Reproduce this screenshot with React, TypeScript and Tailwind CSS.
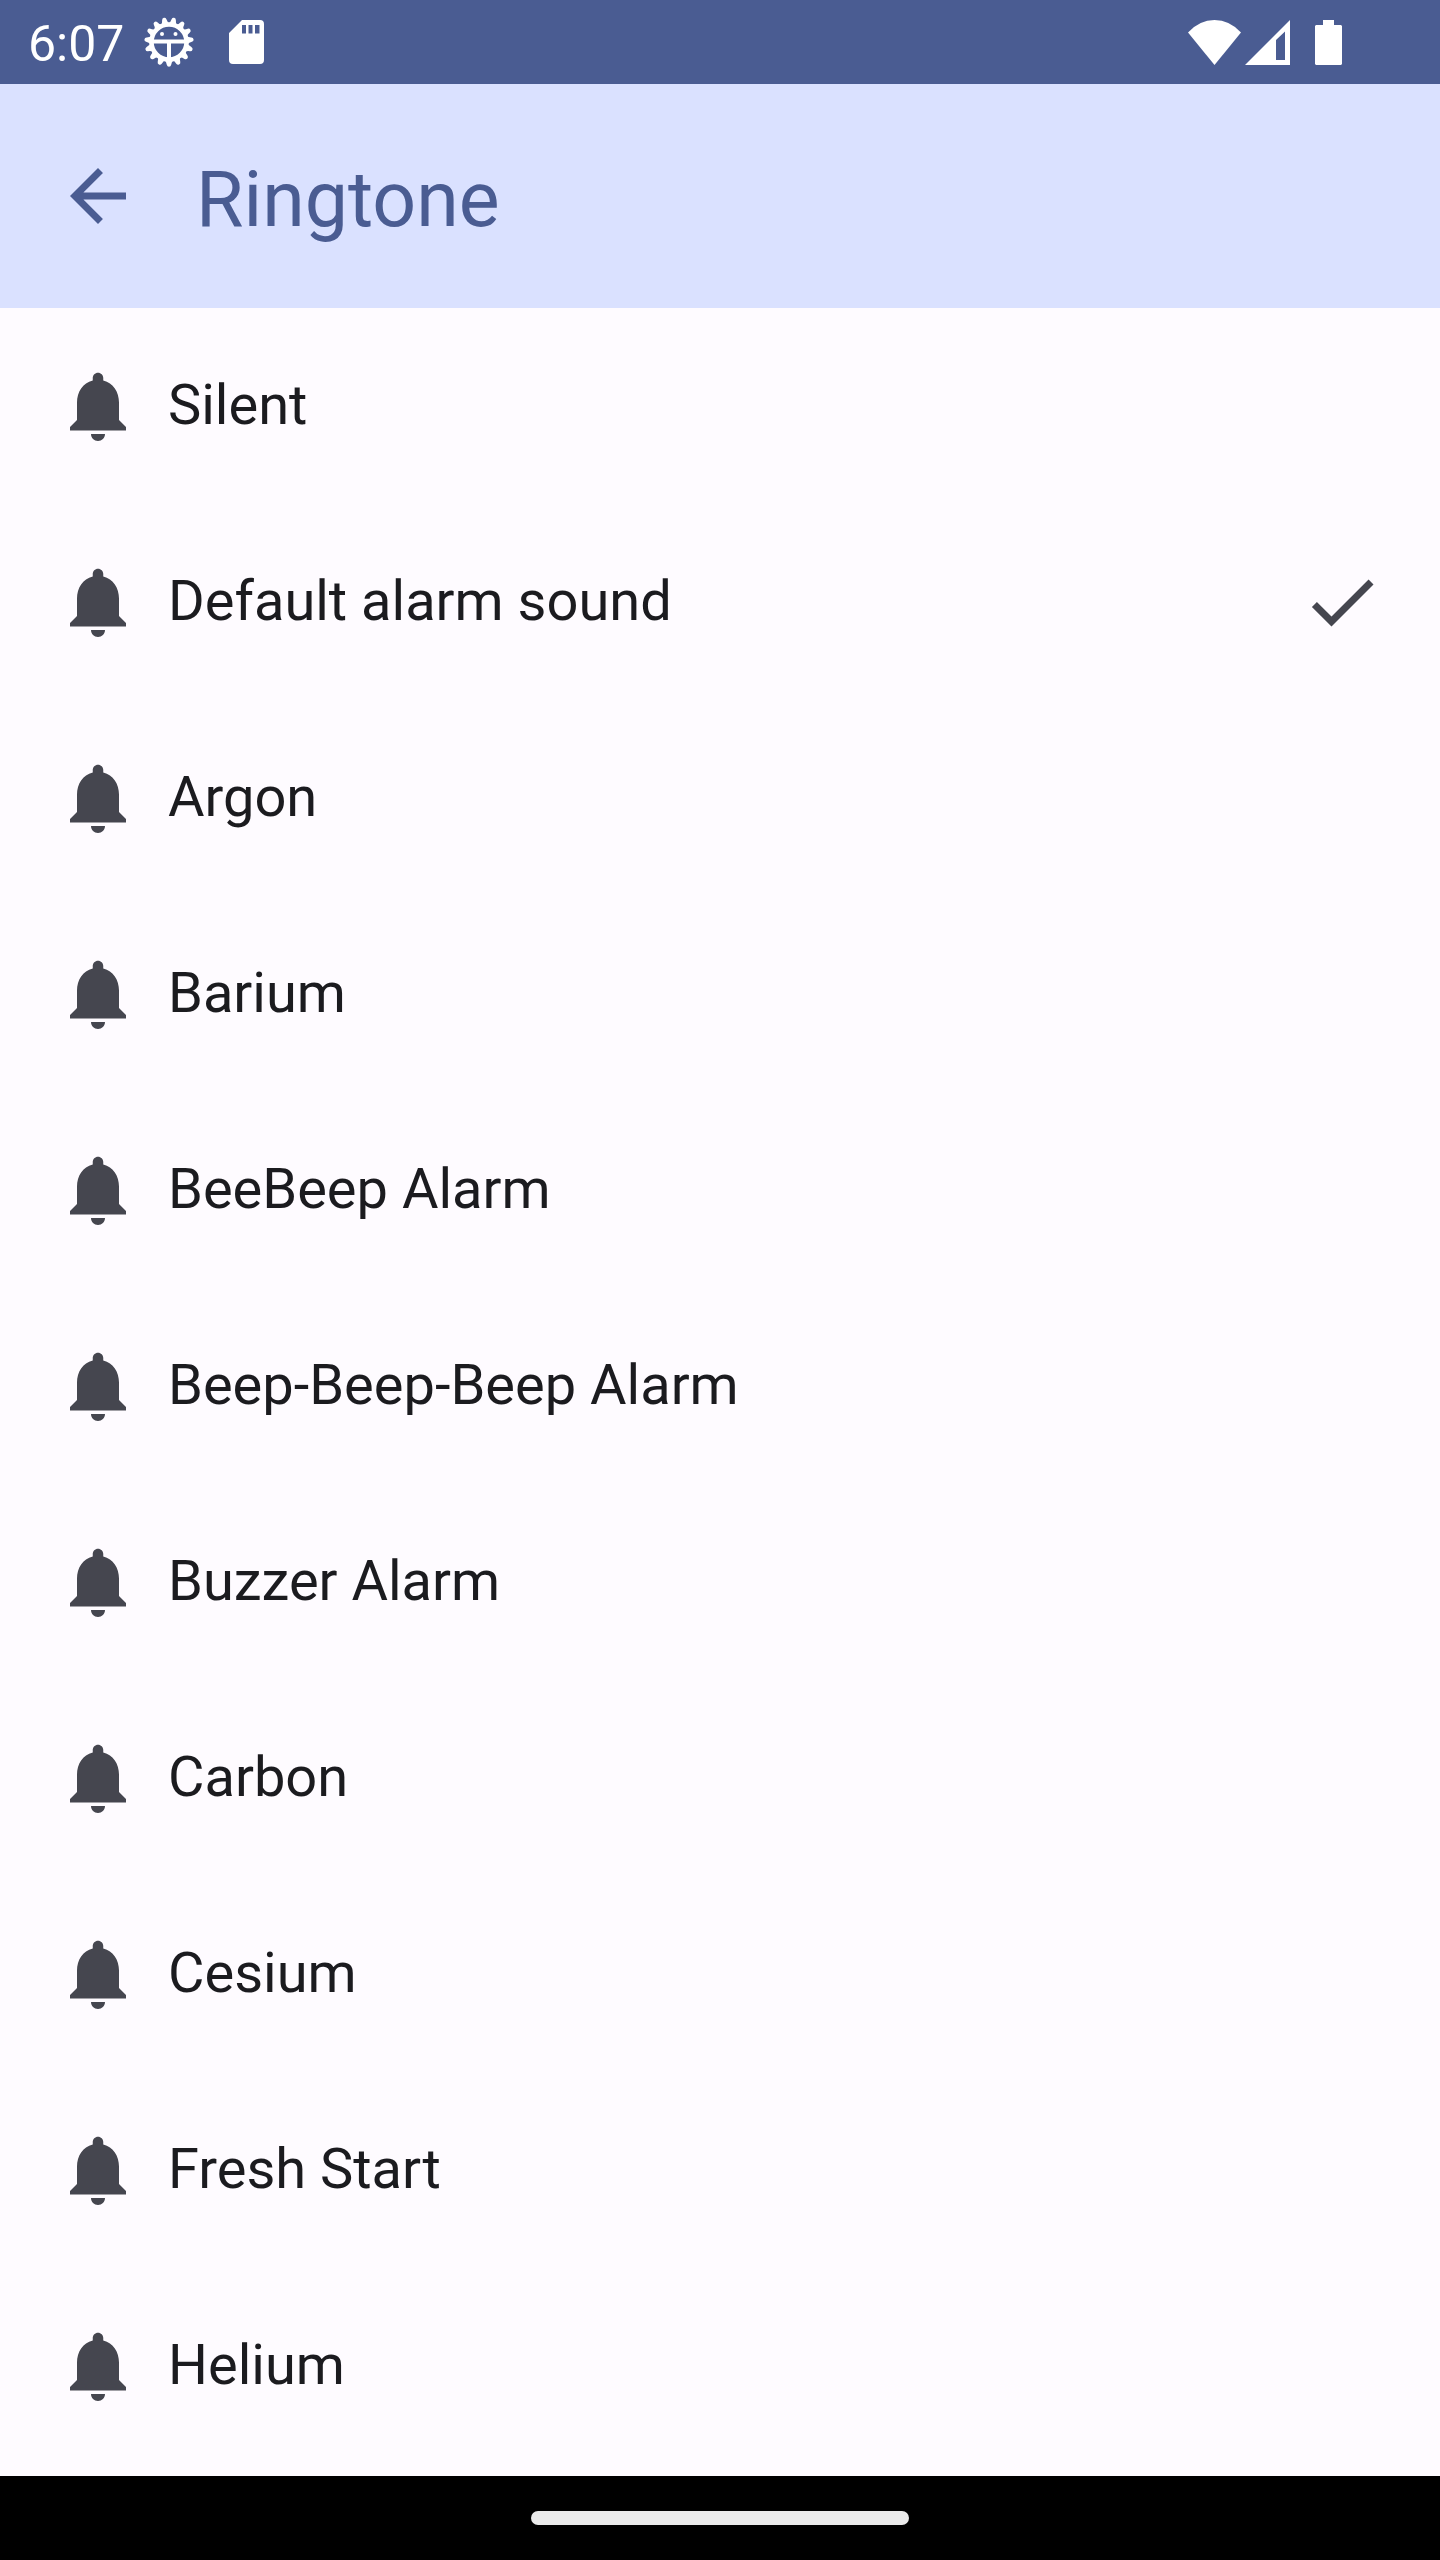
const ringtones = [
  'Silent',
  'Default alarm sound',
  'Argon',
  'Barium',
  'BeeBeep Alarm',
  'Beep-Beep-Beep Alarm',
  'Buzzer Alarm',
  'Carbon',
  'Cesium',
  'Fresh Start',
  'Helium',
];

const selected = 'Default alarm sound';

const teeth = Array.from({ length: 15 }, (_, i) => i * 24 + 12);

function DebugIcon() {
  return (
    <svg viewBox="0 0 50 50" className="size-[50px]" aria-hidden="true">
      {teeth.map((angle) => (
        <path
          key={angle}
          d="M20.5 7 Q22.6 5 22.8 2.2 Q23.2 0.300 25 0.300 Q26.800 0.300 27.200 2.200 Q27.400 5 29.500 7Z"
          fill="white"
          transform={`rotate(${angle} 25 25)`}
        />
      ))}
      <circle cx="25" cy="25" r="17.5" fill="none" stroke="white" strokeWidth="4.5" />
      <path d="M9 24.500H41M25 24V41" stroke="white" strokeWidth="4" />
      <circle cx="18" cy="17" r="2" fill="white" />
      <circle cx="31.500" cy="17" r="2" fill="white" />
    </svg>
  );
}

function SdCardIcon() {
  return (
    <svg viewBox="0 0 35 44" className="h-11 w-[35px]" fill="white" aria-hidden="true">
      <path
        fillRule="evenodd"
        d="M13 0H31Q35 0 35 4V40Q35 44 31 44H4Q0 44 0 40V13ZM13 5V13.500H17V5ZM19.500 5V13.500H23.500V5ZM26 5V13.500H30.500V5Z"
      />
    </svg>
  );
}

function StatusBar() {
  return (
    <div className="flex h-[84px] items-center justify-between bg-[#4a5c92] pl-7 pr-[98px] text-white">
      <div className="flex items-center">
        <span className="pt-1 text-[50px] leading-[56px]">6:07</span>
        <span className="ml-5">
          <DebugIcon />
        </span>
        <span className="ml-[35px]">
          <SdCardIcon />
        </span>
      </div>
      <div className="flex items-center" aria-hidden="true">
        <svg viewBox="0 0 53 45" className="h-[45px] w-[53px]" fill="white">
          <path d="M0 12.500Q11.500 0 26.500 0T53 12.500L26.500 45Z" />
        </svg>
        <svg viewBox="0 0 45 45" className="ml-1 size-[45px]" fill="white">
          <path fillRule="evenodd" d="M45 0V45H0ZM31 20V40H40V11.500Z" />
        </svg>
        <svg viewBox="0 0 27 45" className="ml-[25px] h-[45px] w-[27px]" fill="white">
          <path d="M8 0H19V5H26L27 6V44L26 45H1L0 44V6L1 5H8Z" />
        </svg>
      </div>
    </div>
  );
}

function BellIcon() {
  return (
    <svg viewBox="0 0 24 24" className="size-[84px] shrink-0" fill="#45464f" aria-hidden="true">
      <path d="M12 22c1.100 0 2-.9 2-2h-4c0 1.100.89 2 2 2zm6-6v-5c0-3.070-1.640-5.640-4.500-6.320V4c0-.83-.67-1.500-1.500-1.500s-1.500.67-1.500 1.500v.68C7.630 5.360 6 7.920 6 11v5l-2 2v1h16v-1l-2-2z" />
    </svg>
  );
}

function RingtoneRow({ name }: { name: string }) {
  const isSelected = name === selected;
  return (
    <li>
      <button
        type="button"
        aria-pressed={isSelected}
        className="flex h-[196px] w-full items-center gap-7 px-14 text-left"
      >
        <BellIcon />
        <span className="flex-1 pb-[3px] text-[56px] leading-[84px] text-[#1b1b1f]">{name}</span>
        {isSelected && (
          <svg viewBox="0 0 24 24" className="size-[84px] shrink-0" fill="#45464f" aria-hidden="true">
            <path d="M9 16.170L4.830 12l-1.420 1.410L9 19 21 7l-1.410-1.410z" />
          </svg>
        )}
      </button>
    </li>
  );
}

export default function App() {
  return (
    <div className="flex min-h-screen flex-col bg-[#fefbff] font-['Roboto',sans-serif]">
      <StatusBar />
      <header className="flex h-56 items-center gap-14 bg-[#dae1ff] px-14 text-[#4a5c92]">
        <button type="button" aria-label="Back">
          <svg viewBox="0 0 24 24" className="size-[84px]" fill="currentColor" aria-hidden="true">
            <path d="M20 11H7.830l5.590-5.590L12 4l-8 8 8 8 1.410-1.410L7.830 13H20v-2z" />
          </svg>
        </button>
        <h1 className="pt-2 text-[77px] leading-[98px]">Ringtone</h1>
      </header>
      <main className="flex-1">
        <ul>
          {ringtones.map((name) => (
            <RingtoneRow key={name} name={name} />
          ))}
        </ul>
      </main>
      <div className="flex h-[84px] items-center justify-center bg-black">
        <div className="h-[14px] w-[378px] rounded-full bg-[#ebebeb]" />
      </div>
    </div>
  );
}
